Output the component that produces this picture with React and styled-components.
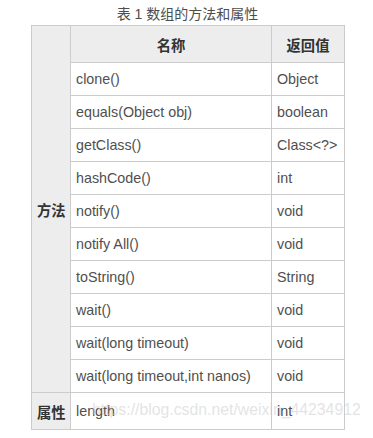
import styled, { createGlobalStyle } from "styled-components";

const GlobalStyle = createGlobalStyle`
  body {
    margin: 0;
    background: #fff;
    font-family: "Liberation Sans", "Noto Sans CJK SC", sans-serif;
    color: #4f4f4f;
  }
`;

const methods = [
  ["clone()", "Object"],
  ["equals(Object obj)", "boolean"],
  ["getClass()", "Class<?>"],
  ["hashCode()", "int"],
  ["notify()", "void"],
  ["notify All()", "void"],
  ["toString()", "String"],
  ["wait()", "void"],
  ["wait(long timeout)", "void"],
  ["wait(long timeout,int nanos)", "void"],
];

const App = () => {
  return (
    <>
      <GlobalStyle />
      <Page>
        <Caption>表 1 数组的方法和属性</Caption>
        <Table>
          <colgroup>
            <col style={{ width: 39 }} />
            <col style={{ width: 201 }} />
            <col style={{ width: 73 }} />
          </colgroup>
          <tbody>
            <Row tall>
              <GroupCell rowSpan={11}>方法</GroupCell>
              <HeadCell>名称</HeadCell>
              <HeadCell>返回值</HeadCell>
            </Row>
            {methods.map(([name, ret]) => (
              <Row key={name}>
                <Cell>{name}</Cell>
                <Cell>{ret}</Cell>
              </Row>
            ))}
            <Row tall>
              <GroupCell>属性</GroupCell>
              <Cell>length</Cell>
              <Cell>int</Cell>
            </Row>
          </tbody>
        </Table>
        <Watermark>https://blog.csdn.net/weixin_44234912</Watermark>
      </Page>
    </>
  );
};

const Page = styled.div`
  position: relative;
  width: 373px;
  height: 438px;
  padding-top: 4px;
  box-sizing: border-box;
`;

const Caption = styled.div`
  height: 21px;
  text-align: center;
  font-size: 14px;
  line-height: 20px;
  color: #4d4d4d;
  padding-left: 2px;
`;

const Table = styled.table`
  margin-left: 31px;
  border-collapse: collapse;
  table-layout: fixed;
  width: 314px;
  font-size: 14.3px;
`;

const Row = styled.tr`
  height: ${(p) => (p.tall ? "37px" : "33px")};
`;

const Cell = styled.td`
  border: 1px solid #cccccc;
  padding: 0 5px;
  white-space: nowrap;
  overflow: hidden;
  vertical-align: middle;
`;

const HeadCell = styled(Cell)`
  background: #ededed;
  font-weight: 700;
  text-align: center;
  color: #333;
`;

const GroupCell = styled(Cell)`
  background: #ededed;
  font-weight: 700;
  padding: 0 5px;
  color: #333;
`;

const Watermark = styled.div`
  position: absolute;
  left: 92px;
  top: 401px;
  font-size: 15.8px;
  color: rgba(200, 200, 200, 0.5);
  white-space: nowrap;
  pointer-events: none;
`;

export default App;
